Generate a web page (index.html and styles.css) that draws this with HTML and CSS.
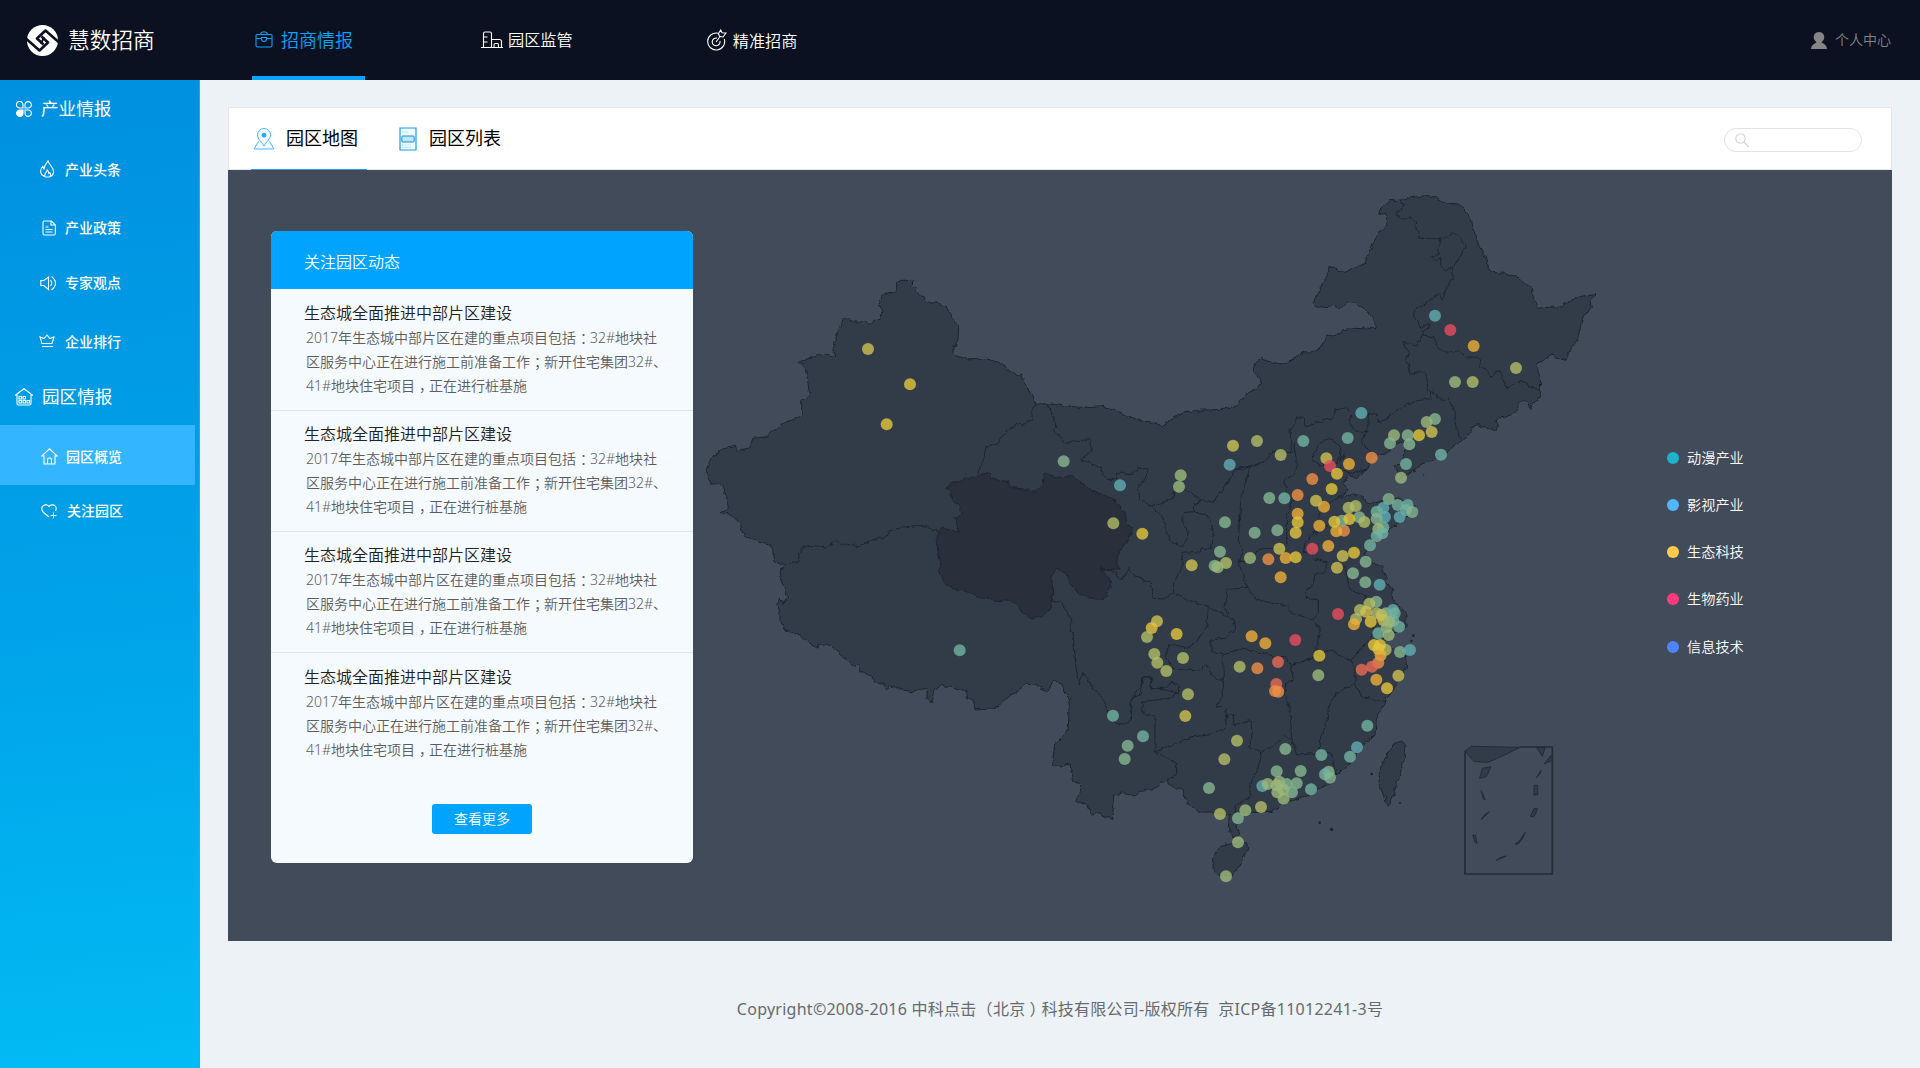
FILE: index.html
```html
<!DOCTYPE html>
<html lang="zh-CN">
<head>
<meta charset="utf-8">
<title>慧数招商</title>
<link rel="stylesheet" href="styles.css">
</head>
<body>
<header class="topbar">
  <a class="brand">
    <svg class="brand-mark" viewBox="0 0 31 31"><circle cx="15.500" cy="15.500" r="15.500" fill="#fff"/><g fill="none" stroke="#0b1120" stroke-width="2.600" stroke-linejoin="round"><path d="M-1 13.500 12.500 25.500 21 17.500 14.500 11.500M32 17.500 18.500 5.500 10 13.500 16.500 19.500"/></g><path d="M17.200 12.300 13.800 18.600" stroke="#0b1120" stroke-width="2"/></svg>
    <span>慧数招商</span>
  </a>
  <nav class="nav">
    <a class="nav-item nav-item--active"><svg width="18" height="17" viewBox="0 0 18 17"><path d="M2 3.500h14q1 0 1 1v10q0 1.500-1.500 1.500h-13Q1 16 1 14.500v-10q0-1 1-1zM5.500 3.500Q6 1 7.500 1h3Q12 1 12.500 3.500M1 7.500h5.500M11.500 7.500H17M6.500 6.500h5V8q0 2.500-2.500 2.500T6.500 8z"/></svg><span>招商情报</span></a>
    <a class="nav-item nav-item--park"><svg width="22" height="18" viewBox="0 0 22 18"><path d="M0 16.500h22M2.500 16.500v-14q0-1.500 1.500-1.500h5q1.500 0 1.500 1.500v14M2.500 6h4M2.500 11h4M10.500 8.500h8q2 0 2 2v6M13 16.500V14q0-1.500 1.300-1.500h2q1.200 0 1.200 1.500v2.500"/></svg><span>园区监管</span></a>
    <a class="nav-item nav-item--target"><svg width="20" height="22" viewBox="0 0 20 22"><path d="M11 4.200A8.500 8.500 0 1 0 17.300 10M10 9.100A3.900 3.900 0 1 0 12.900 12M9 13 13.500 7M12.500 7.500 11.500 4.500 13.700 1l1.300 2.800L19 4l-3 4z"/></svg><span>精准招商</span></a>
  </nav>
  <a class="account"><svg width="16" height="17" viewBox="0 0 16 17"><path d="M8 0c4.500 0 6.500 4.500 4.500 8l-2 2.500C13 11.500 15.500 13 16 17H0c.5-4 3-5.500 5.500-6.500L3.500 8C1.500 4.500 3.500 0 8 0z"/></svg><span>个人中心</span></a>
</header>

<div class="shell">
  <aside class="sidebar">
    <h2 class="group"><svg width="16" height="16" viewBox="0 0 16 16"><path d="M7 7H4a3.300 3.300 0 1 1 3-3zM9 7V4a3.200 3.200 0 1 1 3 3zM9 9h3a3.200 3.200 0 1 1-3 3z"/><path d="M7 9H4a3.200 3.200 0 1 0 3 3z" fill="#fff"/></svg><span>产业情报</span></h2>
    <a class="item item--news"><svg width="16" height="18" viewBox="0 0 16 18"><path d="M5 16.800C-.5 14.500-.3 9.500 2.800 6.400c.2 1.400.5 2 1.200 2.600C4.200 5.500 6.200 3.500 8 .8c1 4 5.500 6.500 5.500 10.700 0 3-1.500 4.700-3.500 5.300-2 .4-3.500.3-5 0zM5 16.500c-1-2.500 1.500-3.500 2.200-6.500 1.800 1.500 1.300 2.500 1.600 3.500l1-.8q1.500 2 .2 4"/></svg><span>产业头条</span></a>
    <a class="item item--policy"><svg width="14" height="16" viewBox="0 0 14 16"><path d="M2.500 1h7l3.800 4v8.500q0 1.500-1.500 1.500h-9.300Q1 15 1 13.500v-11Q1 1 2.500 1zM9 1v4h4M3.500 7h3M3.500 9.500h7M3.500 12h7"/></svg><span>产业政策</span></a>
    <a class="item item--expert"><svg width="17" height="16" viewBox="0 0 17 16"><path d="M.8 5.500h3L8.500 2v12.500l-4.700-4h-3zM10.500 5q2.500 3 0 6M11.500 1.500q8 6.500 0 13.500"/></svg><span>专家观点</span></a>
    <a class="item item--rank"><svg width="16" height="14" viewBox="0 0 16 14"><path d="M3 9.500 1 3l4 1.500L8 1l3 3.500L15 3l-2 6.500zM3 12.500h11"/></svg><span>企业排行</span></a>
    <h2 class="group group--park"><svg width="18" height="18" viewBox="0 0 18 18"><path d="M0 7.500 9 .8l9 6.700M2 6.500v9q0 1.500 1.500 1.500h11q1.500 0 1.500-1.500v-9M4 8.500h2.500v2.500H4zM8 8.500h2.500v2.500H8zM4 12.500h2.500V15H4zM8 12.500h2.500V15H8zM12 12.500h2.500V15H12z"/></svg><span>园区情报</span></h2>
    <a class="item item--overview"><svg width="17" height="17" viewBox="0 0 17 17"><path d="M3 8H.8L8.500.8 16.200 8H14v8H3zM6.500 16v-4.500q0-1.500 1.500-1.500h1q1.500 0 1.500 1.500V16"/></svg><span>园区概览</span></a>
    <a class="item item--follow"><svg width="17" height="15" viewBox="0 0 17 15"><path d="M8 13 2.500 8.500C0 6 .5 3 2.200 1.700 4.500.2 7 .8 8 2.500 9 .8 12 .2 13.800 1.700 15.300 3 15.500 5 14.500 7M12.500 8.500v6M9.500 11.500h6"/></svg><span>关注园区</span></a>
  </aside>

  <main class="content">
    <div class="tabs">
      <a class="tab tab--active"><svg width="22" height="22" viewBox="0 0 22 22"><path d="M6 11.500Q4.500 9 4.500 7a6.500 6.500 0 0 1 13 0c0 3.500-4 6.500-6.500 11Q8.500 14 6 11.500zM5.500 13.500 1 21h20l-4.500-7.500" fill="#f0faff" stroke="#4db9ff" stroke-width="1"/><circle cx="11" cy="7.200" r="2.400" fill="#2fa8f0"/></svg><span>园区地图</span></a>
      <a class="tab tab--list"><svg width="18" height="24" viewBox="0 0 18 24"><path d="M1 1h16v22H1z" fill="#effbff" stroke="#18a0ea" stroke-width="1.200"/><path d="M3 5h7M3 18h9M3 20.500h9" stroke="#bfeaff"/><rect x="2.800" y="9" width="12.400" height="6" rx="1" fill="#bfe7fb" stroke="#168bd0"/></svg><span>园区列表</span></a>
      <label class="search"><svg width="15" height="15" viewBox="0 0 15 15"><circle cx="5.500" cy="5.500" r="4.700"/><path d="m9 9 5 5"/></svg><input type="text" aria-label="搜索"></label>
    </div>

    <section class="panel">
      <div class="feed">
        <h3 class="feed-head">关注园区动态</h3>
        <article class="post"><h4>生态城全面推进中部片区建设</h4><p>2017年生态城中部片区在建的重点项目包括<span class="punct">：</span>32#地块社<br>区服务中心正在进行施工前准备工作<span class="punct">；</span>新开住宅集团32#、<br>41#地块住宅项目<span class="punct">，</span>正在进行桩基施</p></article>
        <article class="post"><h4>生态城全面推进中部片区建设</h4><p>2017年生态城中部片区在建的重点项目包括<span class="punct">：</span>32#地块社<br>区服务中心正在进行施工前准备工作<span class="punct">；</span>新开住宅集团32#、<br>41#地块住宅项目<span class="punct">，</span>正在进行桩基施</p></article>
        <article class="post"><h4>生态城全面推进中部片区建设</h4><p>2017年生态城中部片区在建的重点项目包括<span class="punct">：</span>32#地块社<br>区服务中心正在进行施工前准备工作<span class="punct">；</span>新开住宅集团32#、<br>41#地块住宅项目<span class="punct">，</span>正在进行桩基施</p></article>
        <article class="post"><h4>生态城全面推进中部片区建设</h4><p>2017年生态城中部片区在建的重点项目包括<span class="punct">：</span>32#地块社<br>区服务中心正在进行施工前准备工作<span class="punct">；</span>新开住宅集团32#、<br>41#地块住宅项目<span class="punct">，</span>正在进行桩基施</p></article>
        <a class="more">查看更多</a>
      </div>

      <svg class="map" viewBox="0 0 2700 2160">
        <defs><filter id="rough" x="0" y="0" width="1" height="1" color-interpolation-filters="sRGB"><feTurbulence type="fractalNoise" baseFrequency=".055" numOctaves="2" seed="4"/><feDisplacementMap in="SourceGraphic" scale="15" xChannelSelector="R" yChannelSelector="G"/></filter></defs>
        <g class="land" filter="url(#rough)">
          <path d="M430 412 465 426 500 424 512 432 525 422 541 418 545 400 539 365 546 345 575 340 590 327 590 310 598 301 638 301 637 320 648 328 645 336 668 348 672 358 692 370 708 365 735 377 750 393 752 410 768 430 776 442 774 480 762 500 761 515 768 528 790 533 822 539 860 537 888 544 915 560 930 574 950 584 966 583 970 600 978 618 990 640 1005 658 1008 672 1045 671 1080 676 1140 682 1200 677 1245 688 1255 698 1285 708 1320 722 1360 727 1382 738 1415 716 1450 700 1490 691 1570 688 1610 675 1640 642 1684 614 1682 602 1664 578 1663 565 1670 545 1685 536 1715 547 1756 553 1790 530 1805 518 1830 519 1860 505 1885 467 1922 460 1928 450 1965 442 2028 446 2028 425 1995 388 1970 370 1940 368 1920 387 1900 376 1858 384 1840 372 1850 350 1868 310 1890 262 1935 277 1970 260 2000 250 1998 230 2015 200 2035 157 2064 138 2063 110 2055 100 2037 103 2036 94 2070 62 2100 60 2135 52 2185 46 2210 54 2245 70 2275 72 2295 90 2312 120 2315 140 2330 170 2335 195 2350 220 2362 240 2365 265 2375 276 2415 280 2450 290 2475 312 2495 318 2500 345 2512 385 2540 382 2580 381 2610 362 2650 348 2688 344 2670 360 2674 383 2650 408 2643 430 2632 480 2610 510 2598 539 2550 525 2530 542 2510 550 2521 590 2522 635 2513 663 2495 672 2493 688 2480 670 2470 658 2458 665 2456 688 2430 705 2415 712 2387 714 2392 735 2388 750 2345 742 2330 732 2315 742 2305 765 2282 783 2260 800 2230 825 2200 842 2170 850 2140 868 2120 885 2100 890 2086 860 2105 840 2116 815 2118 795 2100 785 2080 798 2058 822 2015 828 2000 870 1968 893 1945 885 1940 895 1930 915 1945 930 1920 952 1960 942 1990 950 2000 970 2045 965 2070 945 2100 960 2135 965 2155 995 2130 1005 2100 1028 2060 1055 2040 1075 2010 1100 1995 1115 2000 1140 2045 1160 2060 1200 2075 1230 2078 1260 2100 1280 2118 1300 2118 1340 2100 1350 2070 1360 2050 1380 2070 1405 2115 1420 2120 1460 2105 1490 2080 1530 2055 1565 2030 1610 2025 1665 1990 1695 1960 1735 1920 1780 1900 1785 1890 1810 1840 1835 1785 1860 1745 1872 1715 1895 1680 1900 1620 1900 1628 1920 1610 1935 1620 1965 1595 1970 1585 1940 1588 1905 1550 1895 1500 1897 1460 1870 1445 1830 1410 1815 1405 1800 1380 1810 1365 1825 1335 1830 1300 1850 1270 1838 1242 1845 1238 1880 1242 1918 1220 1912 1190 1900 1175 1902 1163 1875 1130 1865 1142 1815 1118 1802 1110 1752 1065 1760 1058 1735 1068 1690 1105 1650 1108 1555 1095 1542 1085 1510 1062 1498 1045 1535 1010 1518 980 1510 945 1540 915 1555 895 1580 860 1588 825 1590 820 1560 802 1552 800 1532 780 1530 720 1513 703 1535 692 1568 682 1558 680 1525 630 1535 590 1525 570 1520 560 1530 550 1510 522 1505 515 1488 482 1472 475 1452 458 1457 430 1430 390 1395 355 1390 350 1405 335 1390 290 1360 255 1350 240 1320 240 1295 230 1275 238 1255 252 1270 263 1250 245 1205 240 1175 255 1155 225 1145 215 1095 185 1090 150 1075 130 1070 120 1030 95 1005 60 997 85 985 72 925 60 912 30 912 18 870 35 830 75 805 105 795 112 813 145 808 160 775 200 770 250 730 305 710 305 665 330 645 315 560 295 545 320 537 375 522 408 530 397 505 410 465z"/>
          <path class="qinghai" d="M740 925 755 908 830 888 870 880 870 895 925 905 930 923 985 928 1003 937 1030 912 1033 878 1085 897 1112 885 1165 925 1200 940 1245 960 1275 995 1280 1025 1297 1050 1280 1090 1255 1115 1250 1150 1260 1170 1225 1170 1200 1160 1235 1210 1225 1228 1213 1258 1190 1260 1160 1250 1130 1235 1110 1210 1095 1175 1070 1168 1055 1190 1058 1235 1050 1285 1025 1310 1000 1315 965 1300 955 1275 930 1260 900 1265 830 1250 790 1230 750 1225 730 1200 715 1175 720 1140 710 1095 712 1060 730 1045 778 1057 765 1015 788 1000 780 980 755 960 752 930z"/>
          <path d="M2085 1690 2105 1682 2118 1698 2112 1740 2095 1800 2078 1845 2068 1878 2058 1868 2055 1850 2038 1815 2038 1775 2055 1735zM1590 1992 1640 1988 1643 2008 1628 2035 1620 2060 1590 2088 1560 2088 1540 2070 1538 2030 1560 2000z"/>
          <path class="border" d="M1008 672 995 684 997 718 965 735 950 730 915 758 895 792 858 798 850 840 832 880M1045 671 1068 735 1063 750 1093 790 1110 790 1130 782 1170 779 1172 815 1142 838 1175 850 1200 867 1200 860M255 1155 290 1148 310 1098 380 1103 405 1082 430 1092 480 1097 530 1075 555 1075 570 1052 620 1040 665 1036 720 1056M1055 1262 1085 1270 1105 1300 1115 1330 1112 1345 1120 1370 1127 1450 1135 1515 1150 1475 1165 1500 1180 1530 1195 1535 1220 1585 1245 1630 1275 1632 1295 1620 1293 1560 1320 1540 1330 1490 1355 1492 1350 1520 1390 1530 1435 1538 1438 1515 1410 1505"/>
          <g class="border" transform="translate(1200 0)">
            <path d="M900 60 911 75 886 103 915 122 930 110 950 125 948 145 962 175 1000 175 1018 178 1040 172 1062 157 1098 195 1082 225 1075 240 1058 265 1060 298 1047 302 1027 360 1018 340 945 390 940 405 962 443 987 430 986 443 965 455 967 465 1002 470 1010 500 1028 516 1075 515 1100 531 1136 532 1142 560 1160 570 1175 595 1190 575 1200 573 1220 625 1245 608 1280 605 1288 622 1322 630M1018 178 1015 222 998 228 1003 240 1020 235 1030 272 1058 265M967 465 950 495 930 490 912 485 910 500 928 515 922 545 933 584 965 572 980 592 984 628 995 635 992 655 940 665 920 675 890 690 840 730 825 702 805 696 803 755 765 753 752 730 752 700 740 682 705 690 695 716 650 728 615 738 608 712 592 710 588 735 570 745 573 800 578 820 545 812 515 817 490 850 450 857 430 870 405 865 395 890 355 945 340 968 305 958 283 975M995 635 1030 662 1045 655 1066 705 1065 730 1082 780M800 755 785 785 815 825M650 800 685 772 715 795 722 825 710 850 660 855 638 840zM735 820 720 845 720 870 750 880 800 870"/>
          </g>
          <g class="border" transform="translate(1200 660)">
            <path d="M0 210 20 235 45 240 50 220 100 220 115 205 140 203 145 220 115 265 120 295 150 318 195 305 218 295 225 265 260 270 305 300 280 320 283 335 250 338 248 375 265 390 262 415 245 440 210 425 195 385 190 360 165 325M283 335 330 350 340 400 335 445 305 445 300 460 250 455 245 500 220 550 222 580 190 597 160 595 150 550 98 520 88 502 65 540 50 520 0 505M222 580 250 595 325 622 385 650 375 620 382 585 378 570 440 562 425 510 415 485 430 455 415 420 422 300 450 200 405 205M580 130 592 190 585 220 555 240 560 290 580 300 560 350 560 430 550 445 480 445 450 485 415 485M440 562 470 600 560 615 570 635 635 660 655 640 655 600 620 595 615 570 640 555 645 520 670 520 685 490 640 475 640 450 610 455 615 430 655 375 665 325 720 290M640 400 685 375 640 408M690 510 735 500 750 570 800 590 790 625 820 640 820 700 860 715M640 660 660 690 650 740 660 790M325 622 320 680 290 725 260 745 210 730 195 770 220 805 300 810 320 795 350 840 370 840 368 760 335 755 332 720 375 715 405 690 400 660 385 650M370 765 430 745 470 755 530 770 555 770 575 795 650 770"/>
          </g>
          <g class="border" transform="translate(1200 1260)">
            <path d="M370 240 370 290 350 318 375 320 380 345 375 385 330 405 275 410 210 440 165 455 165 350 130 345 125 305 210 295 240 270 215 245 195 265 155 265 150 230 130 230 120 260 95 300 92 360M165 455 230 490 230 525 205 540M380 345 400 345 400 375 450 362 460 400 445 440 485 455 530 430 550 410 575 415 570 330 555 290 560 250 580 235 572 200 600 185 650 170 690 150 750 180 765 210 765 250 710 280 685 325 680 370 665 410 655 460 590 465 575 415M485 455 480 490 450 555 450 590 410 615 400 645M655 460 695 460 700 490 710 525M750 180 800 130 820 100M765 250 785 290 860 305"/>
          </g>
        </g>
        <g class="inset" transform="translate(2100 750)">
          <path d="M195 963 215 949 360 952Q285 990 262 997L222 995zM410 953h25l-8 26zM247 1015l26-5-14 30-20 5zM243 1081l13 29-6-3zM243 1169q10-19 26-24zM218 1215l9 1 4 24-5-2zM288 1292q10-12 31-14zM345 1242l12-8 19-28q-3 17-21 36zM391 1160l11-24h11l-11 24zM402 1066h11v29h-11zM409 1043l15-23q-1 13-15 23zM433 1001l20-25v17z"/>
          <path class="inset-frame" d="M195 963V1332H457V951H360"/>
        </g>
        <g class="islets"><circle cx="1859" cy="1928" r="4"/><circle cx="1895" cy="1948" r="5"/><circle cx="2100" cy="1869" r="3"/><circle cx="2015" cy="1782" r="4"/><circle cx="2140" cy="1367" r="4"/><circle cx="2134" cy="1383" r="4"/><circle cx="2143" cy="873" r="4"/><circle cx="2171" cy="885" r="2"/><path d="m1705 1896 18-6-8 6 8 2-15 1zM2014 1668l14-4-16 14"/></g>
        <g id="sites" class="sites"></g>
      </svg>

      <ul class="legend">
        <li class="legend-item legend-item--anime"><span>动漫产业</span></li>
        <li class="legend-item legend-item--film"><span>影视产业</span></li>
        <li class="legend-item legend-item--eco"><span>生态科技</span></li>
        <li class="legend-item legend-item--bio"><span>生物药业</span></li>
        <li class="legend-item legend-item--it"><span>信息技术</span></li>
      </ul>
    </section>

    <footer class="footer">Copyright©2008-2016 中科点击（北京<span class="punct">）</span>科技有限公司-版权所有&nbsp; 京ICP备11012241-3号</footer>
  </main>
</div>
<script src="sites.js"></script>
</body>
</html>
```
FILE: sites.js
```js
// Park sites: "x,y,level"; level a (hot) to k (cool).
const west = "504,507,f 630,613,e 560,733,e 1091,844,i 779,1411,j";
const east = `1005,407,k 1051,450,a 1121,498,d 1248,564,g 1065,606,h 1118,606,g 784,699,k 743,774,j 610,783,j
471,783,g 399,797,f 542,825,g 389,854,k 1005,717,i 980,726,h 995,756,f 923,766,i 957,766,e 882,766,h 870,790,i
928,793,i 1023,824,j 918,852,j 903,893,h 679,835,f 690,858,a 747,852,d 815,833,c 711,881,e 242,886,h 237,920,h
60,916,k 40,1030,g 127,1061,e 637,897,c 695,927,e 508,954,i 553,955,j 593,945,c 648,962,f 672,980,d 593,1001,d
593,1027,e 587,1058,e 658,1037,d 375,1027,i 464,1058,i 532,1051,i 538,1106,f 450,1134,h 505,1138,c 587,1132,e
557,1134,d 542,1192,d 637,1106,a 685,1098,d 728,1128,f 762,1118,e 711,1163,f 360,1115,i 275,1156,f 378,1149,g
344,1157,i 353,1162,h 732,1052,c 709,1054,d 726,1022,i 703,1025,e 778,1012,i 748,1017,e 793,1026,g 746,983,g
767,978,g 866,957,i 850,984,k 830,995,j 855,1011,k 830,1016,i 893,975,j 923,975,j 918,990,j 937,996,i 899,1011,k
850,1042,j 835,1047,h 847,1060,j 830,1068,j 810,1096,j 797,1145,i 759,1180,i 796,1207,i 839,1214,k 829,1265,i
808,1271,g 780,1290,g 798,1295,f 768,1317,g 762,1333,d 812,1325,e 830,1300,g 845,1305,f 858,1300,h 879,1290,k
884,1300,j 880,1322,j 897,1340,j 850,1320,f 868,1325,h 860,1342,h 835,1360,j 866,1365,h 714,1302,a 857,1409,g
822,1395,e 840,1395,e 835,1407,e 900,1416,i 930,1410,k 842,1426,d 171,1324,f 155,1344,e 141,1371,g 230,1362,e
455,1369,d 496,1390,d 586,1380,a 534,1446,b 658,1427,e 419,1460,g 472,1465,c 529,1512,b 525,1533,c 535,1535,c
655,1486,h 163,1422,g 172,1448,g 199,1473,g 249,1434,g 264,1543,g 256,1608,f 835,1448,c 816,1460,b 785,1469,b
829,1499,d 861,1525,e 895,1487,f 802,1637,j 771,1702,k 750,1730,j 39,1607,j 129,1669,j 83,1697,i 74,1737,i
411,1682,g 373,1738,g 327,1824,i 360,1902,g 436,1891,h 414,1915,i 483,1881,g 556,1707,i 664,1725,j 602,1773,i
530,1774,i 686,1775,i 675,1783,j 690,1793,i 633,1828,j 487,1818,k 503,1812,h 538,1805,h 530,1816,h 560,1812,i
590,1810,i 532,1837,h 550,1828,h 576,1837,i 551,1856,h 414,1987,h 378,2089,h`;

const layer = document.getElementById("sites");
function plot(list, offset) {
  list.split(/\s+/).forEach((entry) => {
    const [x, y, level] = entry.split(",");
    const dot = document.createElementNS("http://www.w3.org/2000/svg", "circle");
    dot.setAttribute("cx", Number(x) + offset);
    dot.setAttribute("cy", y);
    dot.setAttribute("r", 18);
    dot.setAttribute("class", "lv-" + level);
    layer.appendChild(dot);
  });
}
plot(west, 0);
plot(east, 1200);
```
FILE: styles.css
```css
* { box-sizing: border-box; margin: 0; padding: 0; }
body {
  width: 1920px; height: 1068px; overflow: hidden;
  background: #edf2f6;
  font-family: "Noto Sans", "Noto Sans CJK SC", sans-serif;
  font-weight: 400;
}
svg { flex: none; display: block; }
/* optical centring of labels next to icons */
.nav-item span, .item span, .group span, .tab span, .legend-item span { padding-bottom: 2px; }

.topbar { display: flex; height: 80px; background: #0b1120; color: #fff; }
.brand { display: flex; align-items: center; width: 252px; padding-left: 27px; gap: 10px; font-size: 21.7px; font-weight: 350; }
.brand span { padding-bottom: 3px; }
.brand-mark { width: 31px; height: 31px; }
.nav { display: flex; }
.nav-item { display: flex; align-items: center; height: 80px; font-size: 16.2px; font-weight: 350; }
.nav-item svg { fill: none; stroke: currentColor; stroke-width: 1.1; }
.nav-item--active { width: 113px; padding: 4px 0 0 3px; gap: 8px; color: #05a5ff; font-size: 18px; border-bottom: 4px solid #05a5ff; }
.nav-item--active svg { margin-bottom: 1px; }
.nav-item--park { margin-left: 116px; gap: 5px; }
.nav-item--park svg { margin-bottom: 1px; }
.nav-item--target { margin-left: 134px; gap: 6px; padding-top: 2px; }
.nav-item--target svg { margin-bottom: 2px; }
.account { display: flex; align-items: center; gap: 8px; margin-left: auto; padding-right: 29px; color: #858585; font-size: 14px; font-weight: 350; }
.account span { padding-bottom: 3px; }
.account svg { fill: currentColor; }

.shell { display: flex; height: 988px; }
.sidebar { width: 200px; color: #fff; background: linear-gradient(175deg, #0090e0, #00a3e9 55%, #02bbf4); border-right: 1px solid #22a8ee; }
.sidebar svg { fill: none; stroke: currentColor; stroke-width: 1.1; }
.group { display: flex; align-items: center; height: 58px; padding-left: 16px; gap: 9px; font-size: 17.6px; font-weight: 400; }
.group span { padding-bottom: 4px; }
.group--park { height: 53px; padding: 0 0 4px 15px; gap: 9px; }
.group--park span { padding-bottom: 2px; }
.item { display: flex; align-items: center; padding-left: 40px; gap: 9px; font-size: 14px; font-weight: 500; }
.item--news { height: 64px; }
.item--news svg { margin-bottom: 2px; }
.item--policy { height: 52px; padding-left: 42px; }
.item--expert { height: 58px; gap: 8px; }
.item--rank { height: 60px; padding-left: 39px; gap: 10px; }
.item--rank svg { margin-bottom: 2px; }
.item--overview { height: 60px; width: 195px; padding-top: 3px; padding-left: 41px; gap: 8px; background: #33b5ff; }
.item--follow { height: 52px; padding-left: 41px; }

.content { flex: 1; padding: 27px 28px 0; }
.tabs { display: flex; align-items: center; height: 63px; padding-left: 22px; background: #fff; border: 1px solid #e1e7eb; }
.tab { display: flex; align-items: center; height: 62px; font-size: 18px; color: #000; font-weight: 400; }
.tab span { padding-bottom: 3px; }
.tab--active { width: 116px; padding: 1px 0 0 2px; gap: 11px; border-bottom: 1px solid #1da1f0; }
.tab--list { margin-left: 32px; gap: 12px; }
.search { display: flex; align-items: center; width: 138px; height: 24px; margin: 2px 29px 0 auto; padding-left: 10px; border: 1px solid #e2e2e2; border-radius: 12px; }
.search svg { fill: none; stroke: #d2d2d2; stroke-width: 1.1; margin-top: 2px; }
.search input { width: 90px; border: 0; outline: 0; background: none; }

.panel { display: flex; align-items: flex-start; height: 771px; padding-left: 43px; background: #424b5a; }
.feed { width: 422px; height: 632px; margin-top: 61px; border-radius: 6px; overflow: hidden; background: #f5faff; }
.feed-head { height: 58px; padding-left: 33px; line-height: 62px; font-size: 16px; font-weight: 350; color: #fff; background: #00a4ff; }
.post { height: 121px; padding: 11px 0 0 33px; border-bottom: 1px solid #e0e6eb; }
.feed-head + .post { height: 122px; padding-top: 12px; }
.post h4 { font-size: 16px; line-height: 25px; font-weight: 350; color: #222; }
.post p { padding-left: 2px; font-size: 14px; line-height: 24px; font-weight: 350; color: #5c5c5c; white-space: nowrap; }
.post:nth-of-type(4) { border-bottom: 0; padding-top: 12px; }
.punct { padding-left: 4px; letter-spacing: -4px; }
.more { display: block; width: 100px; height: 30px; margin: 30px auto 0; border-radius: 3px; background: #00a4ff; color: #fff; font-size: 14px; line-height: 29px; text-align: center; font-weight: 350; }

.map { width: 900px; height: 720px; margin: 10px 0 0 7px; }
.land { fill: #323c48; stroke: #1d242d; stroke-width: 3; stroke-linejoin: round; }
.qinghai { fill: #2a303b; }
.border { fill: none; }
.inset { fill: #323c48; stroke: #242b34; stroke-width: 3; }
.inset-frame { fill: none; stroke-width: 5; }
.islets { fill: #1d242d; }
.sites { fill-opacity: .8; }
.lv-a { fill: #e84c5e; }
.lv-b { fill: #ea6a52; }
.lv-c { fill: #ee8e43; }
.lv-d { fill: #eeae38; }
.lv-e { fill: #e4c63c; }
.lv-f { fill: #cdc251; }
.lv-g { fill: #b2bd68; }
.lv-h { fill: #9cb97a; }
.lv-i { fill: #85b590; }
.lv-j { fill: #72b1a1; }
.lv-k { fill: #61acb3; }

.legend { margin: 264px 0 0 67px; list-style: none; }
.legend-item { display: flex; align-items: center; gap: 8px; height: 47.25px; color: #fff; font-size: 14.2px; font-weight: 350; }
.legend-item::before { content: ""; width: 12px; height: 12px; border-radius: 50%; background: #1eb2cc; }
.legend-item--film::before { background: #50b7ff; }
.legend-item--eco::before { background: #ffcb4e; }
.legend-item--bio::before { background: #ff3a7d; }
.legend-item--it::before { background: #5084ff; }

.footer { margin-top: 56px; text-align: center; font-size: 16px; line-height: 24px; letter-spacing: .26px; font-weight: 400; color: #666a6e; }
```
